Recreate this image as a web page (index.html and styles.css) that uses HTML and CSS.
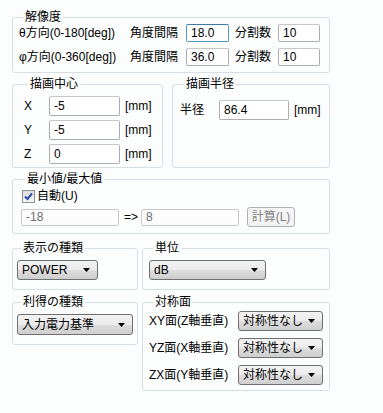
FILE: index.html
```html
<!DOCTYPE html>
<html lang="ja">

<head>
    <meta charset="UTF-8">
    <title>表示設定</title>
    <link rel="stylesheet" href="styles.css">
</head>

<body>
    <div class="panel">
        <!-- 解像度 -->
        <fieldset class="group res">
            <legend>解像度</legend>
            <div class="res-row">
                <span>θ方向(0-180[deg])</span>
                <span>角度間隔</span>
                <input class="box focus" value="18.0">
                <span class="pad">分割数</span>
                <input class="box" value="10">
            </div>
            <div class="res-row">
                <span>φ方向(0-360[deg])</span>
                <span>角度間隔</span>
                <input class="box" value="36.0">
                <span class="pad">分割数</span>
                <input class="box" value="10">
            </div>
        </fieldset>

        <div class="pair center-row">
            <fieldset class="group center">
                <legend>描画中心</legend>
                <div class="xyz-row"><span>X</span><input class="box tall" value="-5"><span>[mm]</span></div>
                <div class="xyz-row"><span>Y</span><input class="box tall" value="-5"><span>[mm]</span></div>
                <div class="xyz-row"><span>Z</span><input class="box tall" value="0"><span>[mm]</span></div>
            </fieldset>
            <fieldset class="group radius">
                <legend>描画半径</legend>
                <div class="rad-row"><span>半径</span><input class="box tall" value="86.4"><span>[mm]</span></div>
            </fieldset>
        </div>

        <fieldset class="group range">
            <legend>最小値/最大値</legend>
            <label class="check">
                <span class="tick">
                    <svg width="9" height="9" viewBox="0 0 9 9"><path d="M1 4.5 L3.5 7 L8 1.5" fill="none" stroke="#2a4fa8" stroke-width="2"/></svg>
                </span>
                自動(U)
            </label>
            <div class="range-row">
                <input class="box off" value="-18" disabled>
                <span>=&gt;</span>
                <input class="box off" value="8" disabled>
                <button class="calc" disabled>計算(L)</button>
            </div>
        </fieldset>

        <div class="pair kind-row">
            <fieldset class="group kind">
                <legend>表示の種類</legend>
                <div class="drop w-power"><span>POWER</span><svg width="7" height="4" viewBox="0 0 7 4"><path d="M0 0 H7 L3.5 4 Z"/></svg></div>
            </fieldset>
            <fieldset class="group unit">
                <legend>単位</legend>
                <div class="drop w-unit"><span>dB</span><svg width="7" height="4" viewBox="0 0 7 4"><path d="M0 0 H7 L3.5 4 Z"/></svg></div>
            </fieldset>
        </div>

        <div class="pair gain-row">
            <fieldset class="group gain">
                <legend>利得の種類</legend>
                <div class="drop w-gain"><span>入力電力基準</span><svg width="7" height="4" viewBox="0 0 7 4"><path d="M0 0 H7 L3.5 4 Z"/></svg></div>
            </fieldset>
            <fieldset class="group sym">
                <legend>対称面</legend>
                <div class="sym-row">
                    <span>XY面(Z軸垂直)</span>
                    <div class="drop w-sym"><span>対称性なし</span><svg width="7" height="4" viewBox="0 0 7 4"><path d="M0 0 H7 L3.5 4 Z"/></svg></div>
                </div>
                <div class="sym-row">
                    <span>YZ面(X軸垂直)</span>
                    <div class="drop w-sym"><span>対称性なし</span><svg width="7" height="4" viewBox="0 0 7 4"><path d="M0 0 H7 L3.5 4 Z"/></svg></div>
                </div>
                <div class="sym-row">
                    <span>ZX面(Y軸垂直)</span>
                    <div class="drop w-sym"><span>対称性なし</span><svg width="7" height="4" viewBox="0 0 7 4"><path d="M0 0 H7 L3.5 4 Z"/></svg></div>
                </div>
            </fieldset>
        </div>
    </div>
</body>

</html>
```

FILE: styles.css
```css
/* General page */
body {
    margin: 0;
    background: #fcfdfd;
    color: #000;
    font-family: 'Liberation Sans', 'Noto Sans CJK JP', sans-serif;
    font-size: 12px;
    line-height: 14px;
}

.panel {
    width: 318px;
    padding: 10px 0 0 12px;
    display: flex;
    flex-direction: column;
}

/* Group boxes */
.group {
    margin: 0;
    min-width: 0;
    border: 1px solid #d5dfe5;
    border-radius: 3px;
    padding: 0 6px 0 6px;
}

.group legend {
    padding: 0 2px;
    margin-left: 4px;
    line-height: 14px;
}

.pair {
    display: flex;
    align-items: flex-start;
}

/* Text boxes */
.box {
    box-sizing: border-box;
    height: 18px;
    margin: 0;
    padding: 0 4px;
    border: 1px solid #abadb3;
    border-top-color: #c4c7cc;
    border-radius: 2px;
    background: #fff;
    font: inherit;
    color: #000;
}

.box.tall {
    height: 20px;
}

.box.focus {
    border-color: #5794bf;
    border-top-color: #3d7bad;
}

.box.off {
    height: 17px;
    border-color: #c9c9c9;
    background: #fcfcfc;
    color: #6d6d6d;
}

/* 解像度 */
.res {
    padding-bottom: 6px;
}

.res-row {
    display: grid;
    grid-template-columns: 111px 56px 43px 49px 42px;
    align-items: center;
    height: 18px;
    margin-bottom: 6px;
}

.res-row:last-child {
    margin-bottom: 0;
}

.res-row .box {
    width: 100%;
}

.res-row .pad {
    padding-left: 6px;
}

/* 描画中心 / 描画半径 */
.center-row {
    margin-top: 4px;
    gap: 9px;
}

.center {
    width: 151px;
    box-sizing: border-box;
    padding: 5px 0 3px 11px;
}

.xyz-row {
    display: grid;
    grid-template-columns: 20px 71px auto;
    column-gap: 5px;
    align-items: center;
    margin-bottom: 4px;
}

.xyz-row:last-child {
    margin-bottom: 0;
}

.xyz-row .box {
    width: 71px;
}

.radius {
    width: 158px;
    box-sizing: border-box;
    align-self: stretch;
    padding: 9px 0 0 7px;
}

.rad-row {
    display: grid;
    grid-template-columns: 34px 70px auto;
    column-gap: 5px;
    align-items: center;
}

.rad-row .box {
    width: 70px;
}

/* 最小値/最大値 */
.range {
    margin-top: 4px;
    padding: 2px 0 6px 8px;
}

.check {
    display: flex;
    align-items: center;
    gap: 2px;
    height: 16px;
    margin-left: 1px;
}

.tick {
    box-sizing: border-box;
    width: 13px;
    height: 13px;
    border: 1px solid #8e8f8f;
    background: linear-gradient(#dcdcdc, #f6f6f6);
    display: flex;
    align-items: center;
    justify-content: center;
}

.range-row {
    display: flex;
    align-items: center;
    margin-top: 3px;
}

.range-row .box {
    width: 98px;
}

.range-row span {
    width: 22px;
    padding-left: 5px;
    box-sizing: border-box;
}

.calc {
    box-sizing: border-box;
    width: 48px;
    height: 20px;
    margin-left: 8px;
    padding: 0;
    border: 1px solid #adb2b5;
    border-radius: 3px;
    background: #f4f4f4;
    color: #838383;
    font: inherit;
}

/* Drop-down boxes */
.drop {
    box-sizing: border-box;
    height: 20px;
    display: flex;
    align-items: center;
    justify-content: space-between;
    padding: 0 7px 0 4px;
    border: 1px solid #707070;
    border-radius: 3px;
    background: linear-gradient(#f2f2f2 0%, #ebebeb 50%, #dddddd 51%, #cfcfcf 100%);
}

.drop svg {
    fill: #000;
}

.w-power {
    width: 81px;
}

.w-unit {
    width: 117px;
}

.w-gain {
    width: 116px;
    height: 21px;
}

.w-sym {
    width: 85px;
}

/* 表示の種類 / 単位 */
.kind-row {
    margin-top: 7px;
    gap: 4px;
}

.kind,
.gain {
    width: 126px;
    box-sizing: border-box;
    padding: 5px 0 9px 4px;
}

.unit {
    width: 188px;
    box-sizing: border-box;
    padding: 5px 0 9px 6px;
}

/* 利得の種類 / 対称面 */
.gain-row {
    margin-top: 5px;
    gap: 4px;
}

.sym {
    width: 188px;
    box-sizing: border-box;
    padding: 2px 0 5px 6px;
}

.sym-row {
    display: flex;
    align-items: center;
    justify-content: space-between;
    padding-right: 6px;
    margin-bottom: 7px;
}

.sym-row:last-child {
    margin-bottom: 0;
}
```
